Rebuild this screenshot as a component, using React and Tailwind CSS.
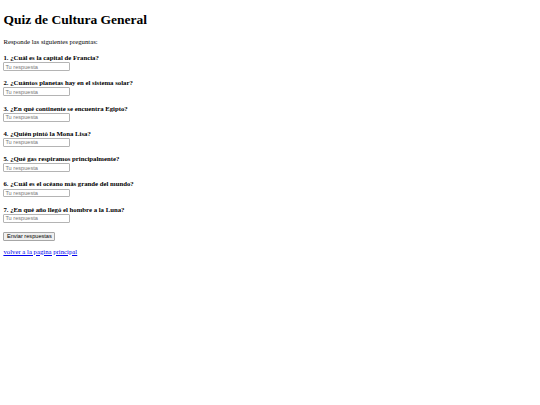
const questions = [
  '1. ¿Cuál es la capital de Francia?',
  '2. ¿Cuántos planetas hay en el sistema solar?',
  '3. ¿En qué continente se encuentra Egipto?',
  '4. ¿Quién pintó la Mona Lisa?',
  '5. ¿Qué gas respiramos principalmente?',
  '6. ¿Cuál es el océano más grande del mundo?',
  '7. ¿En qué año llegó el hombre a la Luna?',
];

const App = () => {
  return (
    <div className="w-[540px] h-[405px] overflow-hidden bg-white pt-[11.6px] px-[3.4px] font-['Liberation_Serif',serif] text-[6.75px] text-black">
      <h1 className="text-[13.5px] font-bold leading-[15.5px]">Quiz de Cultura General</h1>
      <p className="mt-[10.55px] mb-[8.65px] leading-[7.76px]">Responde las siguientes preguntas:</p>
      <form>
        {questions.map((q) => (
          <div key={q} className="mb-[8.23px]">
            <label className="block font-bold leading-[7.76px]">{q}</label>
            <input
              type="text"
              placeholder="Tu respuesta"
              className="block w-[67px] h-[8.9px] mt-[0.4px] px-[1px] border border-[#b4b4b4] rounded-[1px] font-['Liberation_Sans',sans-serif] text-[5.62px] placeholder:text-[#7a7a7a]"
            />
          </div>
        ))}
        <button
          type="button"
          className="h-[8.9px] px-[2.5px] bg-[#efefef] border border-[#a6a6a6] rounded-[1px] font-['Liberation_Sans',sans-serif] text-[5.62px] leading-[6.3px] text-black"
        >
          Enviar respuestas
        </button>
      </form>
      <p className="mt-[6.75px] leading-[7.76px]">
        <a href="#" className="text-[#0000ee] underline">volver a la pagina principal</a>
      </p>
    </div>
  );
};

export default App;
